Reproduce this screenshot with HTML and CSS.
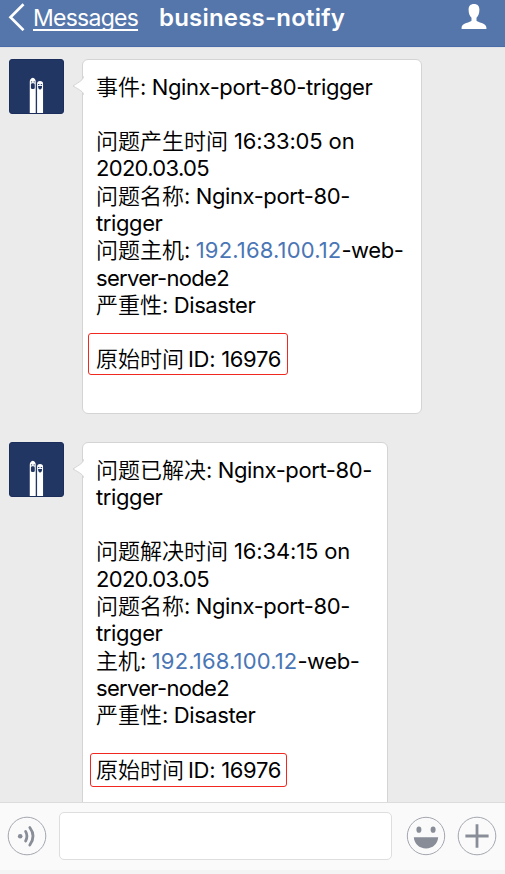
FILE: index.html
```html
<!DOCTYPE html>
<html lang="zh-CN">
<head>
<meta charset="utf-8">
<title>business-notify</title>
<link rel="stylesheet" href="styles.css">
</head>
<body>
<svg class="defs" aria-hidden="true">
  <symbol id="avatar" viewBox="0 0 55 55">
    <path d="M20.5 55V22.5Q20.5 19.5 23.7 18.5Q26.7 19.5 26.7 22.5V55zM28.1 55V24.5Q28.1 21.7 31.1 21.7Q34.3 21.7 34.3 24.5V55z" fill="#fff"/>
    <g fill="#223664"><rect x="21.8" y="22.2" width="1.2" height="1"/><rect x="24.5" y="22.2" width="1.2" height="1"/><rect x="21.7" y="24.2" width="4" height="6" rx="1.5"/><rect x="29.1" y="25" width="1.4" height="1"/><rect x="31.9" y="25" width="1.4" height="1"/><path d="M29.1 27h4.2q0 3.5-2.1 3.5t-2.1-3.5z"/></g>
  </symbol>
</svg>
<div class="app">
  <header class="bar">
    <svg class="back" width="18" height="28" viewBox="0 0 18 28"><path d="M15.5 1.2L2.5 14.2L15.5 27.2" fill="none" stroke="#fff" stroke-width="2.7"/></svg>
    <a class="messages">Messages</a>
    <h1 class="title">business-notify</h1>
    <svg class="person" width="26" height="26" viewBox="0 0 26 26"><path d="M13 0C16.6 0 18.4 2.1 18.4 5.8C18.4 9.4 17.3 12 15.5 13.8V16.8C16.2 18.4 25.4 19.2 25.4 23.5V25H.6V23.5C.6 19.2 9.8 18.4 10.5 16.8V13.8C8.7 12 7.6 9.4 7.6 5.8C7.6 2.1 9.4 0 13 0Z" fill="#fff"/></svg>
  </header>
  <main class="chat">
    <section class="message">
      <svg class="avatar"><use href="#avatar"/></svg>
      <div class="bubble first">
        <svg class="tail" width="12" height="20" viewBox="0 0 12 20"><path d="M12 0C11 4 8 5.5 1 10C8 14 11 15.5 12 19" fill="#fff" stroke="#d4d4d4"/></svg>
        <p>事件<span>: Nginx-port-80-trigger</span></p>
        <p class="gap">问题产生时间<span class="time"> 16:33:05 on</span></p>
        <p><span class="tight">2020.03.05</span></p>
        <p>问题名称<span>: Nginx-port-80-</span></p>
        <p><span>trigger</span></p>
        <p>问题主机<span>: <a>192.168.100.12</a>-web-</span></p>
        <p><span class="tight">server-node2</span></p>
        <p>严重性<span>: Disaster</span></p>
        <p class="gap origin">原始时间<span class="id">ID: 16976</span></p>
      </div>
    </section>
    <section class="message">
      <svg class="avatar"><use href="#avatar"/></svg>
      <div class="bubble second">
        <svg class="tail" width="12" height="20" viewBox="0 0 12 20"><path d="M12 0C11 4 8 5.5 1 10C8 14 11 15.5 12 19" fill="#fff" stroke="#d4d4d4"/></svg>
        <p>问题已解决<span>: Nginx-port-80-</span></p>
        <p><span>trigger</span></p>
        <p class="gap">问题解决时间<span class="time"> 16:34:15 on</span></p>
        <p><span class="tight">2020.03.05</span></p>
        <p>问题名称<span>: Nginx-port-80-</span></p>
        <p><span>trigger</span></p>
        <p>主机<span>: <a>192.168.100.12</a>-web-</span></p>
        <p><span class="tight">server-node2</span></p>
        <p>严重性<span>: Disaster</span></p>
        <p class="gap origin">原始时间<span class="id">ID: 16976</span></p>
      </div>
    </section>
  </main>
  <footer class="composer">
    <svg class="voice" width="40" height="40" viewBox="0 0 40 40"><circle cx="20" cy="20" r="18.8" fill="none" stroke="#a4a7b0"/><circle cx="13.2" cy="20.2" r="2.3" fill="#888d98"/><path d="M18.6 15.4Q21.3 20.2 18.6 25M22.8 11.5Q29.3 20.2 22.8 29" fill="none" stroke="#888d98" stroke-width="2.8" stroke-linecap="round"/></svg>
    <div class="input"></div>
    <svg class="smile" width="40" height="40" viewBox="0 0 40 40"><circle cx="20" cy="20" r="18.7" fill="none" stroke="#a4a7b0"/><ellipse cx="12.9" cy="13.7" rx="2.5" ry="3.1" fill="#888d98"/><ellipse cx="27.1" cy="13.7" rx="2.5" ry="3.1" fill="#888d98"/><path d="M7.8 21.3H32.2C31.6 28.1 26.8 32.4 20 32.4S8.4 28.1 7.8 21.3Z" fill="#888d98"/></svg>
    <svg class="plus" width="40" height="40" viewBox="0 0 40 40"><circle cx="20" cy="20" r="18.8" fill="none" stroke="#a4a7b0"/><path d="M8.4 20H31.6M20 8.2V31.8" stroke="#888d98" stroke-width="2.8"/></svg>
  </footer>
</div>
</body>
</html>
```
FILE: styles.css
```css
*, *::after { box-sizing: border-box; }
body { margin: 0; background: #fafafa; font-family: Inter, "Noto Sans CJK SC", sans-serif; color: #000; }
p, h1 { margin: 0; }
.defs { display: block; width: 0; height: 0; }
.app { height: 874px; display: flex; flex-direction: column; overflow: hidden; }
.bar { flex: none; height: 47px; display: flex; align-items: flex-start; background: #5576ab; border-bottom: 1px solid #4b6da7; color: #fff; }
.back { flex: none; margin: 3px 0 0 8px; }
.messages { margin: 3px 0 0 7px; width: 105px; font-size: 23px; line-height: 30px; letter-spacing: -.75px; white-space: nowrap; text-decoration: underline; text-decoration-thickness: 1.5px; text-underline-offset: 3px; text-decoration-skip-ink: none; }
.title { margin: 3px 0 0 21px; font-size: 24px; line-height: 30px; font-weight: 600; letter-spacing: .2px; white-space: nowrap; }
.person { flex: none; margin: 4px 18px 0 auto; }
.chat { flex: none; height: 755px; overflow: hidden; background: #ebebeb; padding: 11px 0 0 9px; display: flex; flex-direction: column; gap: 28px; border-top: 1px solid #e2e4e8; }
.message { flex: none; display: flex; align-items: flex-start; gap: 18px; }
.avatar { flex: none; width: 55px; height: 55px; background: #223664; border: 1px solid #1b2d5b; border-radius: 3px; }
.bubble { position: relative; border: 1px solid #d4d4d4; border-radius: 6px; background: #fff; padding: 13.5px 0 0 13px; font-size: 22px; line-height: 27.3px; font-weight: 350; }
.bubble p { height: 27.3px; white-space: nowrap; }
.bubble .gap { margin-top: 27.3px; }
.bubble span { letter-spacing: -.4px; font-weight: 400; }
.bubble .time { letter-spacing: -.15px; }
.bubble .tight { letter-spacing: -.7px; }
.bubble a { color: #4a76b5; letter-spacing: .15px; }
.first { width: 340px; height: 355px; }
.second { width: 306px; height: 400px; }
.tail { position: absolute; left: -11px; top: 16px; }
.bubble .id { margin-left: 4px; letter-spacing: -.3px; }
.origin { position: relative; }
.origin::after { content: ""; position: absolute; left: -8px; top: -13px; width: 200px; height: 42px; border: 1px solid #f0281f; border-radius: 3px; }
.second .origin::after { left: -6px; top: -4px; width: 197px; height: 34px; }
.composer { flex: none; height: 72px; display: flex; align-items: flex-start; border-top: 1px solid #dcdcdc; background: linear-gradient(#fafafa 67px, #f4f4f4 67px); }
.composer svg { flex: none; margin-top: 13px; }
.voice { margin-left: 7px; }
.input { width: 333px; height: 48px; margin: 9px 0 0 12px; background: #fff; border: 1px solid #dedede; border-radius: 5px; }
.smile { margin-left: 14px; }
.plus { margin-left: 11px; }
```
